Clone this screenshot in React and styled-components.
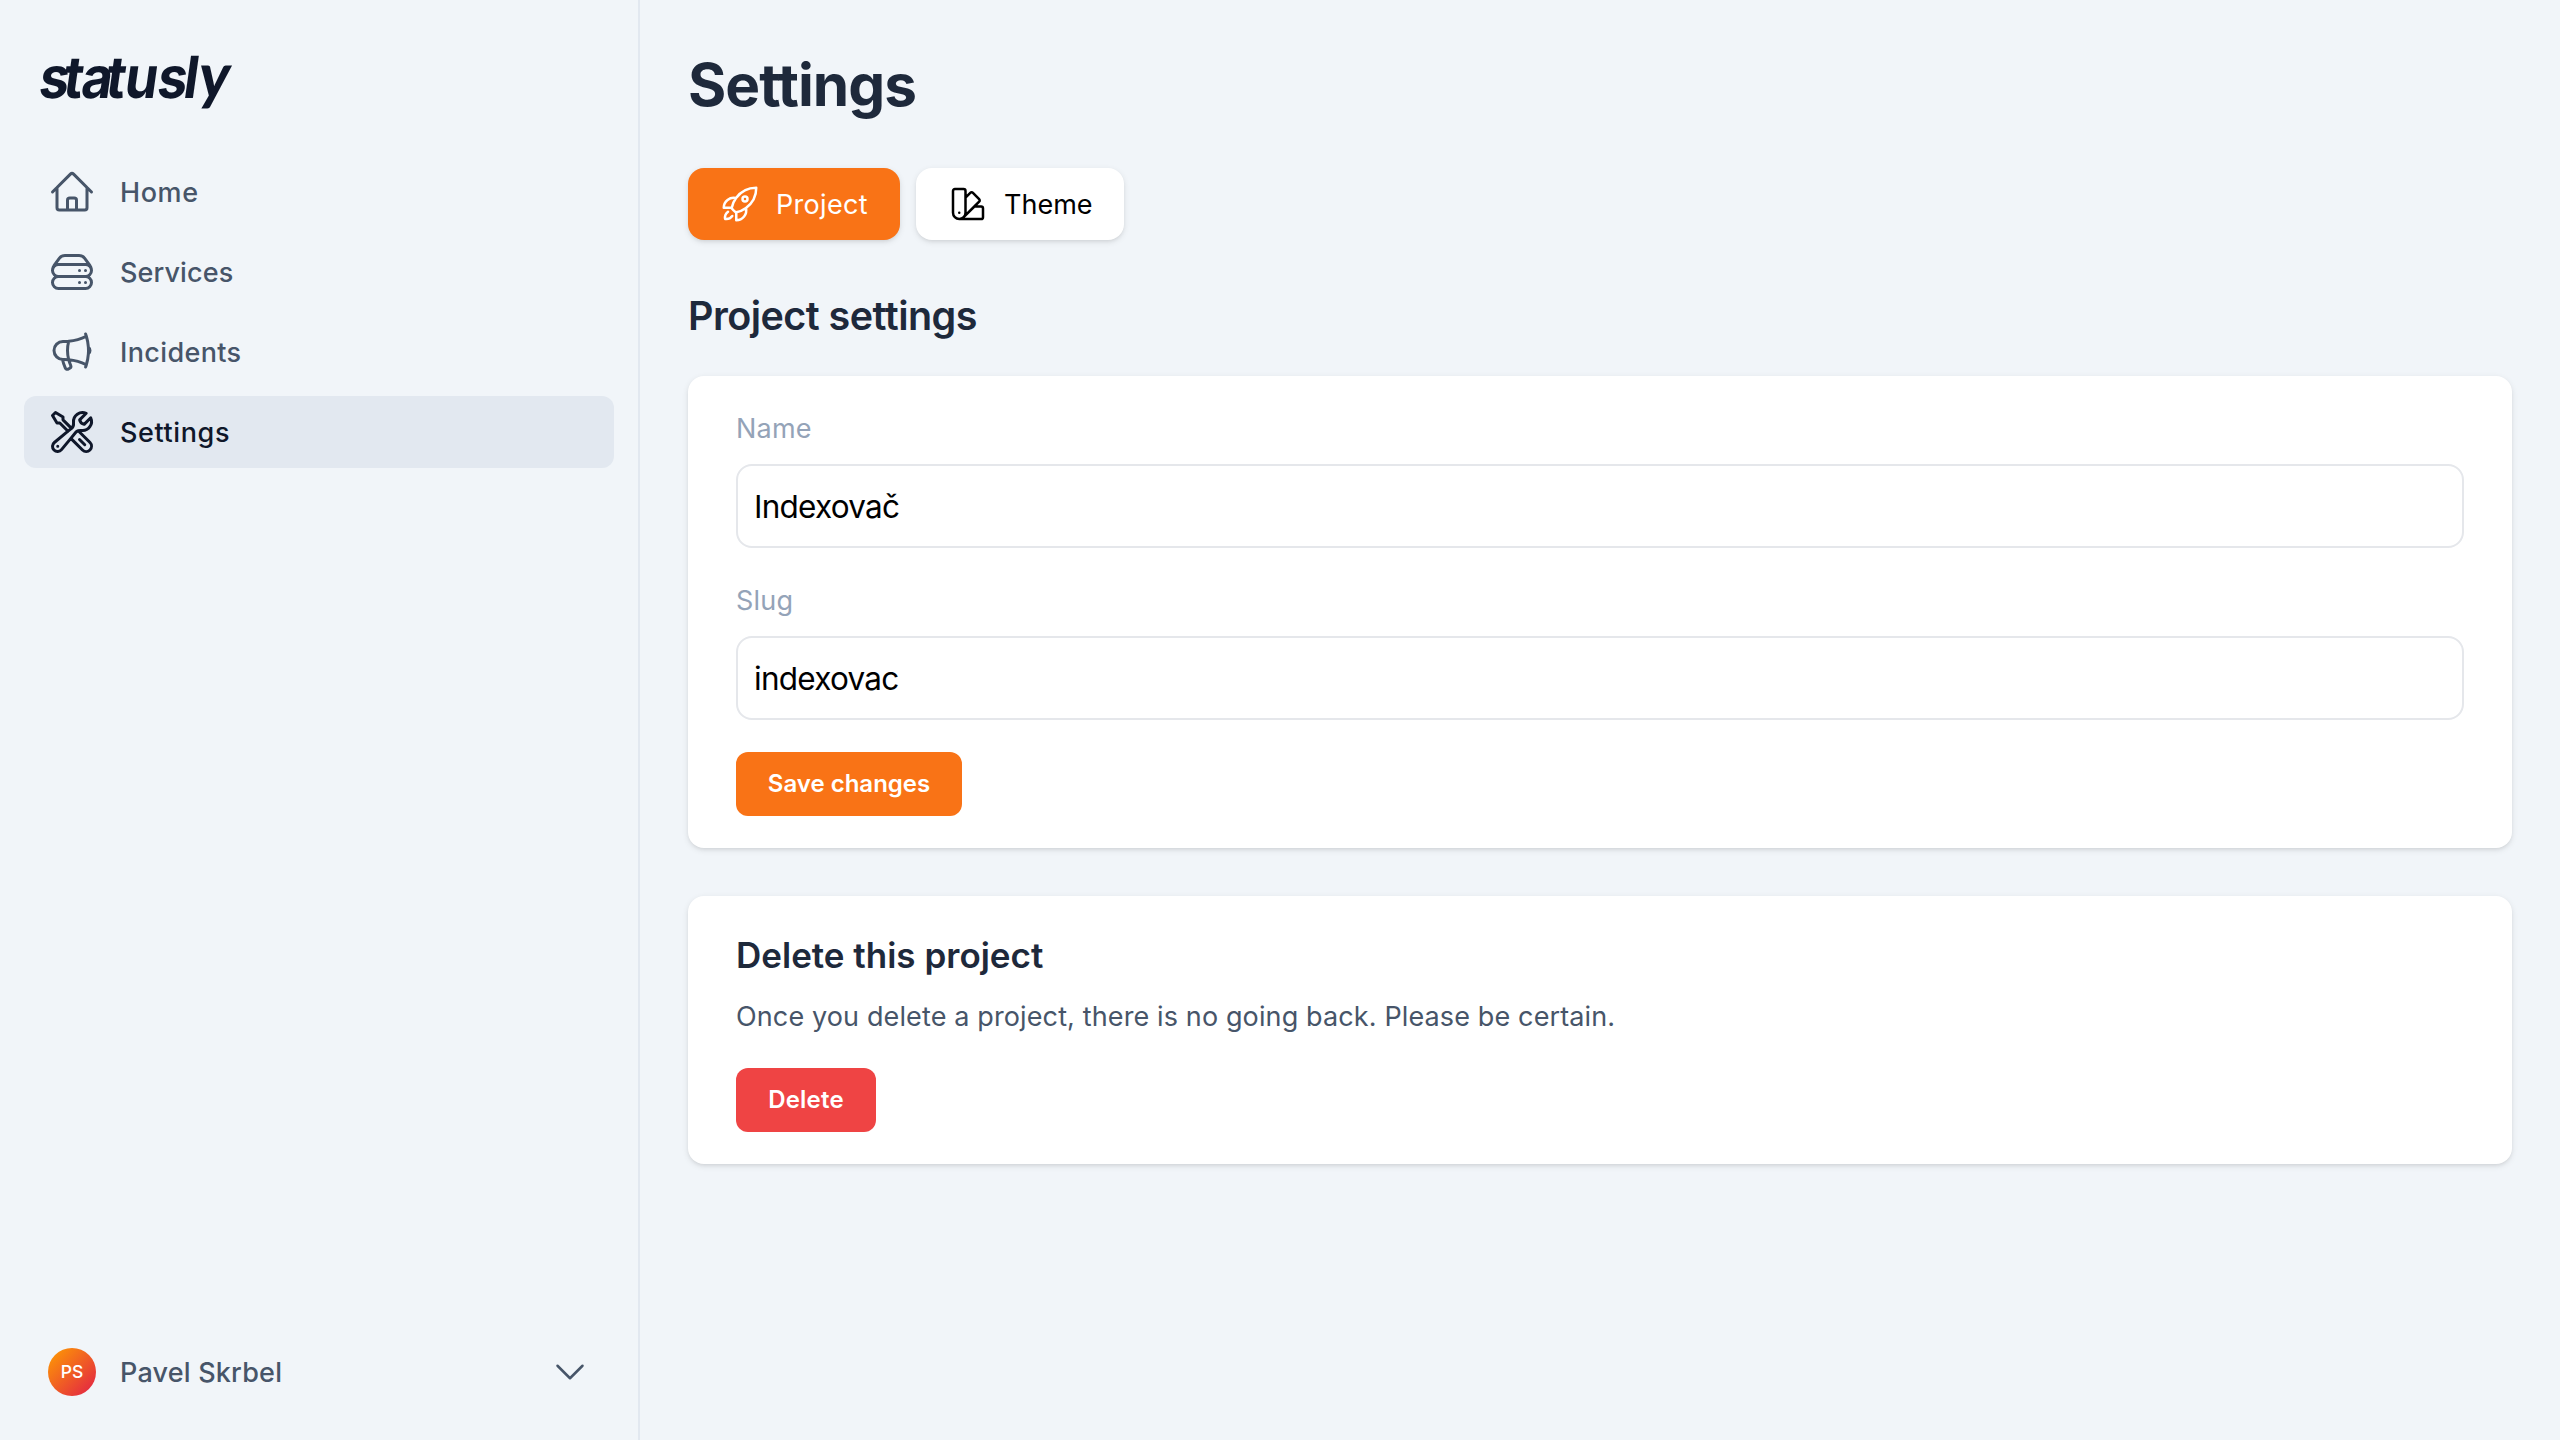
import React from 'react';
import styled, { createGlobalStyle } from 'styled-components';
import {
  HiOutlineHome,
  HiOutlineServerStack,
  HiOutlineMegaphone,
  HiOutlineWrenchScrewdriver,
  HiOutlineRocketLaunch,
  HiOutlineSwatch,
  HiOutlineChevronDown,
} from 'react-icons/hi2';

const GlobalStyle = createGlobalStyle`
  *, *::before, *::after { box-sizing: border-box; }
  body {
    margin: 0;
    background: #f1f5f9;
    font-family: Inter, "Liberation Sans", sans-serif;
    -webkit-font-smoothing: antialiased;
  }
  h1, h2, h3, p { margin: 0; }
  button, input { font-family: inherit; }
`;

const Shell = styled.div`
  display: flex;
  height: 100vh;
  background: #f1f5f9;
`;

const Sidebar = styled.aside`
  display: flex;
  flex-direction: column;
  width: 640px;
  flex: none;
  padding: 52px 24px 32px;
  border-right: 2px solid #e2e8f0;
`;

const LogoLink = styled.a`
  display: block;
  height: 104px;
  padding-left: 16px;
`;

const LogoMark = styled.svg`
  display: block;
  overflow: visible;
`;

const Wordmark = styled.text`
  font: 700 58px Inter, sans-serif;
  fill: #0f172a;
`;

const WordmarkTail = styled.tspan`
  font: 900 63px Lato, sans-serif;
`;

const Nav = styled.nav`
  display: flex;
  flex-direction: column;
  gap: 8px;
  flex: 1;
`;

const NavItem = styled.a`
  display: flex;
  align-items: center;
  gap: 24px;
  height: 72px;
  padding: 0 24px;
  border-radius: 12px;
  font-size: 27px;
  font-weight: 500;
  letter-spacing: ${(p) => p.$track}px;
  color: ${(p) => (p.$active ? '#0f172a' : '#475569')};
  background: ${(p) => (p.$active ? '#e2e8f0' : 'transparent')};

  svg {
    width: 48px;
    height: 48px;
    flex: none;
  }
`;

const UserMenu = styled.button`
  display: flex;
  align-items: center;
  gap: 24px;
  height: 72px;
  padding: 0 24px;
  border: 0;
  background: none;
  color: #475569;
  font-size: 27px;
  font-weight: 500;
  letter-spacing: 0.2px;

  svg {
    width: 40px;
    height: 40px;
    margin-left: auto;
  }
`;

const Avatar = styled.span`
  display: grid;
  place-items: center;
  width: 48px;
  height: 48px;
  padding-bottom: 1px;
  border-radius: 50%;
  background: linear-gradient(135deg, #ff9f00, #e11d48);
  color: #fff;
  font-size: 17.5px;
  letter-spacing: 0;
`;

const Main = styled.main`
  flex: 1;
  min-width: 0;
  padding: 49px 48px 48px;
`;

const PageTitle = styled.h1`
  font-size: 58.5px;
  font-weight: 650;
  line-height: 72px;
  letter-spacing: -1px;
  color: #1e293b;
`;

const Tabs = styled.div`
  display: flex;
  gap: 16px;
  margin-top: 47px;
`;

const Tab = styled.button`
  display: flex;
  align-items: center;
  gap: 16px;
  width: ${(p) => p.$width}px;
  height: 72px;
  padding: 0 0 0 32px;
  border: 0;
  border-radius: 16px;
  font-size: 27px;
  font-weight: 420;
  letter-spacing: ${(p) => (p.$active ? 0.3 : 0)}px;
  color: ${(p) => (p.$active ? '#fff' : '#000')};
  background: ${(p) => (p.$active ? '#f97316' : '#fff')};
  box-shadow: 0 2px 6px rgba(0, 0, 0, 0.1), 0 2px 4px -2px rgba(0, 0, 0, 0.1);

  svg {
    width: 40px;
    height: 40px;
    flex: none;
  }
`;

const SectionTitle = styled.h2`
  margin: 48px 0 32px;
  font-size: 39.5px;
  font-weight: 620;
  line-height: 56px;
  letter-spacing: -0.54px;
  color: #1e293b;
`;

const Card = styled.section`
  display: flex;
  flex-direction: column;
  align-items: stretch;
  gap: 32px;
  padding: 32px 48px;
  border-radius: 16px;
  background: #fff;
  box-shadow: 0 2px 6px rgba(0, 0, 0, 0.1), 0 2px 4px -2px rgba(0, 0, 0, 0.1);

  & + & {
    margin-top: 48px;
  }
`;

const Field = styled.label`
  display: flex;
  flex-direction: column;
  gap: 15px;
  padding-top: 1px;
  font-size: 27px;
  line-height: 40px;
  letter-spacing: 0.2px;
  color: #94a3b8;
`;

const Input = styled.input`
  height: 84px;
  padding: 0 16px;
  border: 2px solid #e5e7eb;
  border-radius: 16px;
  background: #fff;
  color: #000;
  font-size: 31.5px;
  letter-spacing: -0.75px;
  outline: none;
`;

const Button = styled.button`
  align-self: flex-start;
  width: ${(p) => p.$width}px;
  height: 64px;
  padding: 0 0 2px;
  border: 0;
  border-radius: 12px;
  background: ${(p) => (p.$danger ? '#ef4444' : '#f97316')};
  color: #fff;
  font-size: 24px;
  font-weight: 620;
  letter-spacing: ${(p) => (p.$danger ? 0.2 : 0)}px;
`;

const CardTitle = styled.h3`
  margin-top: -1px;
  font-size: 35px;
  font-weight: 600;
  line-height: 56px;
  color: #1e293b;
`;

const CardText = styled.p`
  margin: 14px 0 -1px;
  font-size: 27px;
  line-height: 40px;
  letter-spacing: 0.126px;
  color: #475569;
`;

const NAV = [
  { label: 'Home', Icon: HiOutlineHome, track: 0.6 },
  { label: 'Services', Icon: HiOutlineServerStack, track: 0.1 },
  { label: 'Incidents', Icon: HiOutlineMegaphone, track: 0.35 },
  { label: 'Settings', Icon: HiOutlineWrenchScrewdriver, track: 0.6, active: true },
];

function Logo() {
  return (
    <LogoMark width="192" height="60" viewBox="0 0 192 60">
      <Wordmark
        transform="translate(0 46) skewX(-8) scale(0.92 1)"
        x="-3 23.5 43 69.5 90 125.5 154 170"
        y="0"
      >
        statusl<WordmarkTail>y</WordmarkTail>
      </Wordmark>
    </LogoMark>
  );
}

export default function App() {
  return (
    <>
      <GlobalStyle />
      <Shell>
        <Sidebar>
          <LogoLink>
            <Logo />
          </LogoLink>
          <Nav>
            {NAV.map(({ label, Icon, track, active }) => (
              <NavItem key={label} $active={active} $track={track}>
                <Icon />
                {label}
              </NavItem>
            ))}
          </Nav>
          <UserMenu>
            <Avatar>PS</Avatar>
            Pavel Skrbel
            <HiOutlineChevronDown />
          </UserMenu>
        </Sidebar>
        <Main>
          <PageTitle>Settings</PageTitle>
          <Tabs>
            <Tab $active $width={212}>
              <HiOutlineRocketLaunch />
              Project
            </Tab>
            <Tab $width={208}>
              <HiOutlineSwatch />
              Theme
            </Tab>
          </Tabs>
          <SectionTitle>Project settings</SectionTitle>
          <Card>
            <Field>
              Name
              <Input defaultValue="Indexovač" spellCheck={false} />
            </Field>
            <Field>
              Slug
              <Input defaultValue="indexovac" spellCheck={false} />
            </Field>
            <Button $width={226}>Save changes</Button>
          </Card>
          <Card>
            <div>
              <CardTitle>Delete this project</CardTitle>
              <CardText>
                Once you delete a project, there is no going back. Please be certain.
              </CardText>
            </div>
            <Button $danger $width={140}>
              Delete
            </Button>
          </Card>
        </Main>
      </Shell>
    </>
  );
}
